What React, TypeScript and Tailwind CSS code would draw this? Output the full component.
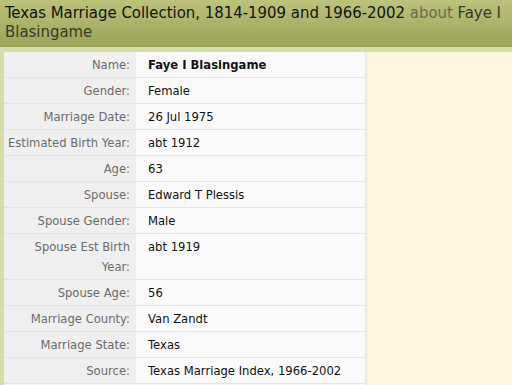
import React from "react";

const rows: [string, string, boolean?][] = [
  ["Name:", "Faye I Blasingame", true],
  ["Gender:", "Female"],
  ["Marriage Date:", "26 Jul 1975"],
  ["Estimated Birth Year:", "abt 1912"],
  ["Age:", "63"],
  ["Spouse:", "Edward T Plessis"],
  ["Spouse Gender:", "Male"],
  ["Spouse Est Birth Year:", "abt 1919"],
  ["Spouse Age:", "56"],
  ["Marriage County:", "Van Zandt"],
  ["Marriage State:", "Texas"],
  ["Source:", "Texas Marriage Index, 1966-2002"],
];

export default function App() {
  return (
    <div className="w-[512px] h-[385px] overflow-hidden bg-[#fff8e1] flex flex-col">
      <div
        className="h-[47px] px-[5px] pt-[3px] bg-gradient-to-b from-[#bcc27c] to-[#9aa258] text-[16.6px] leading-[19px] text-[#111]"
        style={{ fontFamily: '"DejaVu Sans Condensed", "DejaVu Sans", sans-serif' }}
      >
        Texas Marriage Collection, 1814-1909 and 1966-2002{" "}
        <span className="text-[#6a6c4c]">about</span>{" "}
        <span className="text-[#3a3a28]">Faye I Blasingame</span>
      </div>
      <div className="h-[5px] bg-[#d6dcaa]" />
      <div className="flex flex-1">
        <div className="w-[4px] bg-[#d6dcaa]" />
        <div
          className="w-[361px] flex flex-col text-[11.6px] leading-[20px]"
          style={{ fontFamily: '"DejaVu Sans", Verdana, sans-serif' }}
        >
          {rows.map(([label, value, bold], i) => (
            <div key={i} className="flex border-b border-[#e4e4e4]">
              <div className="w-[132px] shrink-0 bg-[#efefef] text-right pr-[6px] pl-[3px] pt-[3px] pb-[2px] text-[#6b6b6b]">
                {label}
              </div>
              <div
                className={
                  "flex-1 bg-[#f9f9f9] pl-[12px] pt-[3px] pb-[2px] text-[#111] " +
                  (bold ? "font-bold" : "")
                }
              >
                {value}
              </div>
            </div>
          ))}
        </div>
        <div className="w-[3px] bg-gradient-to-r from-[#e6e6e0] to-[#fbf5e0]" />
        <div className="flex-1" />
      </div>
    </div>
  );
}
